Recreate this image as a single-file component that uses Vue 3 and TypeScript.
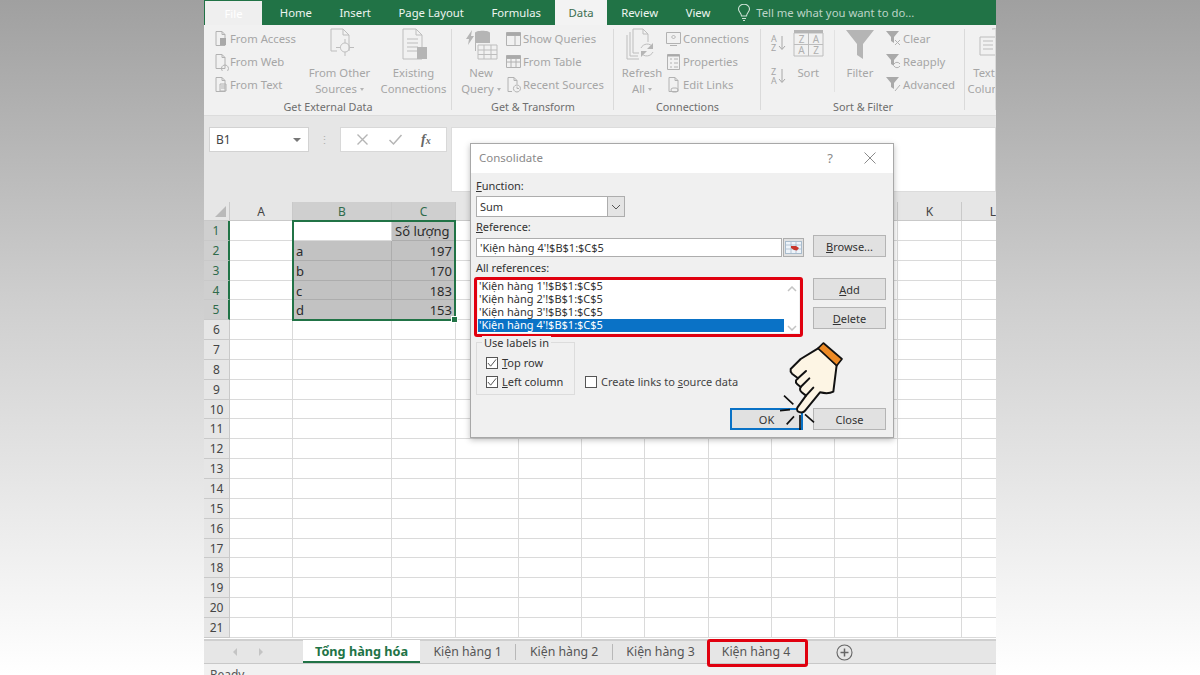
<template>
  <div class="page">
    <div class="excel">
      <!-- tabs -->
      <div class="tabs">
        <div class="file-tab">File</div>
        <div class="tab-list">
          <span v-for="t in tabs" :key="t" class="tab" :class="{ active: t === 'Data' }">{{ t }}</span>
        </div>
        <div class="tell">
          <svg width="14" height="18" viewBox="0 0 14 18" fill="none" stroke="#cfe3d7" stroke-width="1.1">
            <path d="M4.5 12c0-3-3-4-3-7a5.5 4.8 0 0 1 11 0c0 3-3 4-3 7zM5 14.500h4M6 16.500h2" />
          </svg>
          <span>Tell me what you want to do...</span>
        </div>
      </div>

      <!-- ribbon -->
      <div class="ribbon">
        <div v-for="g in groups" :key="g.name" class="group" :style="{ width: g.width + 'px' }">
          <div class="group-body" :style="{ paddingLeft: g.pad + 'px' }">
            <template v-for="(b, i) in g.items" :key="i">
              <div v-if="b.kind === 'small'" class="small-col" :style="{ width: b.width + 'px' }">
                <div v-for="s in b.rows" :key="s.label" class="small-btn">
                  <svg width="17" height="18" viewBox="0 0 17 18" fill="none" stroke="#b2b2b2" stroke-width="1">
                    <path :d="s.icon" />
                    <path v-if="s.fill" :d="s.fill" fill="#a9a9a9" stroke="none" />
                  </svg>
                  <span>{{ s.label }}</span>
                </div>
              </div>
              <div v-else-if="b.kind === 'big'" class="big-btn" :style="{ width: b.width + 'px' }">
                <svg width="34" height="34" viewBox="0 0 34 34" fill="none" stroke="#bdbdbd" stroke-width="1">
                  <path :d="b.icon" />
                  <path v-if="b.fill" :d="b.fill" fill="#b5b5b5" stroke="none" />
                  <g v-if="b.letters" class="grid-letters">
                    <text x="10.500" y="16">Z</text><text x="25" y="16">A</text>
                    <text x="10.500" y="27">A</text><text x="25" y="27">Z</text>
                  </g>
                </svg>
                <span v-for="(l, n) in b.lines" :key="l" class="big-line">
                  {{ l }}<i v-if="b.caret && n === b.lines.length - 1" class="mini-caret"></i>
                </span>
              </div>
              <div v-else-if="b.kind === 'sort'" class="sort-col">
                <div class="sort-mini">
                  <span>A<br />Z</span>
                  <svg width="8" height="16" viewBox="0 0 8 16" fill="none" stroke="#a8a8a8" stroke-width="1"><path d="M4 1v13M1 11l3 3.500L7 11" /></svg>
                </div>
                <div class="sort-mini">
                  <span>Z<br />A</span>
                  <svg width="8" height="16" viewBox="0 0 8 16" fill="none" stroke="#a8a8a8" stroke-width="1"><path d="M4 1v13M1 11l3 3.500L7 11" /></svg>
                </div>
              </div>
              <div v-else class="vsep"></div>
            </template>
          </div>
          <div class="group-label">{{ g.name }}</div>
        </div>
      </div>

      <!-- formula bar -->
      <div class="formula">
        <div class="name-box"><span>B1</span><i class="caret"></i></div>
        <div class="dots">⋮</div>
        <div class="fx-box">
          <svg width="13" height="13" viewBox="0 0 13 13" stroke="#b5b5b5" stroke-width="1.4" fill="none"><path d="M1.500 1.500l10 10M11.500 1.500l-10 10" /></svg>
          <svg width="15" height="13" viewBox="0 0 15 13" stroke="#b5b5b5" stroke-width="1.500" fill="none"><path d="M1.500 7l4 4 8-9" /></svg>
          <span class="fx">f<small>x</small></span>
        </div>
        <div class="formula-input"></div>
      </div>

      <!-- sheet -->
      <div class="sheet">
        <div class="sheet-row head">
          <div class="corner"><i></i></div>
          <div
            v-for="c in cols" :key="c.name" class="col-head" :class="{ sel: c.name === 'B' || c.name === 'C' }"
            :style="{ width: c.width + 'px' }"
          >{{ c.name }}</div>
        </div>
        <div v-for="r in 21" :key="r" class="sheet-row">
          <div class="row-head" :class="{ sel: r <= 5 }">{{ r }}</div>
          <div
            v-for="c in cols" :key="c.name" class="cell"
            :class="cellClass(r, c.name)"
            :style="{ width: c.width + 'px' }"
          >{{ cellText(r, c.name) }}</div>
        </div>
        <div class="selection"><i></i></div>
      </div>

      <!-- sheet tabs -->
      <div class="sheet-tabs">
        <div class="nav-arrows"><i class="left"></i><i class="right"></i></div>
        <div class="sheet-tab current">Tổng hàng hóa</div>
        <template v-for="(s, i) in sheets" :key="s">
          <div class="sheet-tab" :class="{ marked: i === 3 }">{{ s }}</div>
          <div v-if="i < 2" class="tab-sep"></div>
        </template>
        <div class="add-sheet">
          <svg width="17" height="17" viewBox="0 0 17 17" fill="none" stroke="#666" stroke-width="1.100">
            <circle cx="8.500" cy="8.500" r="7.500" /><path d="M8.500 4.500v8M4.500 8.500h8" stroke-width="1.500" />
          </svg>
        </div>
      </div>
      <div class="status">Ready</div>

      <!-- Consolidate dialog -->
      <div class="dialog">
        <div class="dlg-title">
          <span>Consolidate</span>
          <div class="dlg-ctrl">
            <span class="q">?</span>
            <svg width="12" height="12" viewBox="0 0 12 12" stroke="#8a8a8a" stroke-width="1" fill="none"><path d="M.5.5l11 11M11.500.5l-11 11" /></svg>
          </div>
        </div>
        <div class="dlg-body">
          <div class="dlg-left">
            <div class="lbl first"><u>F</u>unction:</div>
            <div class="select">
              <span>Sum</span>
              <div class="sel-arrow">
                <svg width="10" height="6" viewBox="0 0 10 6" fill="none" stroke="#555" stroke-width="1"><path d="M1 1l4 4 4-4" /></svg>
              </div>
            </div>
            <div class="lbl"><u>R</u>eference:</div>
            <div class="ref-row">
              <div class="ref-input">'Kiện hàng 4'!$B$1:$C$5</div>
              <div class="ref-pick">
                <svg width="17" height="13" viewBox="0 0 17 13">
                  <rect x=".5" y=".5" width="16" height="12" fill="#eef4fa" stroke="#a9bccd" />
                  <path d="M1 4h15M1 8h15M6 1v11M11 1v11" stroke="#9fb3c6" stroke-width=".7" />
                  <path d="M6 5h5l3 2-2 2.500-3-.5-3-2z" fill="#c8352a" />
                </svg>
              </div>
            </div>
            <div class="lbl all">All references:</div>
            <div class="ref-box">
              <div class="ref-list">
                <div class="ref-items">
                  <div v-for="(a, i) in refs" :key="a" class="ref-item" :class="{ on: i === 3 }">{{ a }}</div>
                </div>
                <div class="ref-scroll">
                  <svg width="10" height="6" viewBox="0 0 10 6" fill="none" stroke="#c4c4c4" stroke-width="1.500"><path d="M1 5l4-4 4 4" /></svg>
                  <svg width="10" height="6" viewBox="0 0 10 6" fill="none" stroke="#c4c4c4" stroke-width="1.500"><path d="M1 1l4 4 4-4" /></svg>
                </div>
              </div>
            </div>
            <div class="lower">
              <div class="labels-box">
                <span class="legend">Use labels in</span>
                <label class="chk"><i class="box"><svg width="11" height="10" viewBox="0 0 11 10" fill="none" stroke="#444" stroke-width="1"><path d="M1 5l3 3.500 6-7.500" /></svg></i><span><u>T</u>op row</span></label>
                <label class="chk"><i class="box"><svg width="11" height="10" viewBox="0 0 11 10" fill="none" stroke="#444" stroke-width="1"><path d="M1 5l3 3.500 6-7.500" /></svg></i><span><u>L</u>eft column</span></label>
              </div>
              <label class="chk links"><i class="box"></i><span>Create links to <u>s</u>ource data</span></label>
            </div>
          </div>
          <div class="dlg-right">
            <button class="btn browse"><u>B</u>rowse...</button>
            <button class="btn add"><u>A</u>dd</button>
            <button class="btn del"><u>D</u>elete</button>
          </div>
        </div>
        <div class="dlg-foot">
          <button class="btn ok">OK</button>
          <button class="btn">Close</button>
        </div>
      </div>

      <!-- pointing hand -->
      <svg class="hand" width="80" height="95" viewBox="0 0 240 285">
        <path d="M148 38L92 72L62 102Q60 110 66 116L84 130L78 136Q76 142 82 148L92 156L90 162Q90 168 95 172L108 182L82 218Q78 230 90 232Q100 234 106 226L150 172Q175 178 190 170L200 90Z" fill="#fdf5e4" stroke="#111" stroke-width="6" stroke-linejoin="round" />
        <path d="M84 130L108 108M92 156L118 130M108 182L130 158" stroke="#111" stroke-width="6" fill="none" stroke-linecap="round" />
        <path d="M160 24L216 72L200 92L144 40Z" fill="#ed8a25" stroke="#111" stroke-width="5" stroke-linejoin="round" />
        <path d="M42 182L70 208M30 227L60 224M50 268L72 244M90 240V285M105 238L132 262" stroke="#111" stroke-width="5" fill="none" />
      </svg>
    </div>
  </div>
</template>

<script setup lang="ts">
interface SmallRow { label: string; icon: string; fill?: string }
type Item =
  | { kind: 'small'; width: number; rows: SmallRow[] }
  | { kind: 'big'; width: number; lines: string[]; icon: string; fill?: string; caret?: boolean; letters?: boolean }
  | { kind: 'sort' }
  | { kind: 'sep' }

const tabs = ['Home', 'Insert', 'Page Layout', 'Formulas', 'Data', 'Review', 'View']

const page = 'M4 1.500h6l3 3v11H4zM10 1.500v3h3'
const grid = 'M1.500 2.500h14v12h-14zM1.500 5.500h14M1.500 9h14M6 5.500v9M11 5.500v9'

const groups: { name: string; width: number; pad: number; items: Item[] }[] = [
  {
    name: 'Get External Data', width: 248, pad: 8,
    items: [
      {
        kind: 'small', width: 92,
        rows: [
          { label: 'From Access', icon: page, fill: 'M8 8h6v7H8z' },
          { label: 'From Web', icon: page + 'M13 12a3.500 3.500 0 1 1-.1 0z' },
          { label: 'From Text', icon: page + 'M8 8h6v7H8zM9 10h4M9 12h4' },
        ],
      },
      { kind: 'big', width: 71, lines: ['From Other', 'Sources'], caret: true, icon: 'M8 2h12l6 6v16M20 2v6h6M8 2v22h6M22 16a4.500 4.500 0 1 1-.1 0zM22 12v4M22 25v4M13 20.500h4.500M26.500 20.500H31' },
      { kind: 'big', width: 77, lines: ['Existing', 'Connections'], icon: 'M6 2h13l6 6v24H6zM19 2v6h6M10 12h11M10 16h11M10 20h11M10 24h11', fill: 'M20 20h10v12H20z' },
    ],
  },
  {
    name: 'Get & Transform', width: 162, pad: 5,
    items: [
      { kind: 'big', width: 48, lines: ['New', 'Query'], caret: true, icon: 'M14 18h19v14H14zM14 23h19M14 27.500h19M20 18v14M27 18v14', fill: 'M11 6c0-3 15-3 15 0v10H12v8h-1zM2 12l6-9-1 6 3 0-6 9 1-6z' },
      {
        kind: 'small', width: 109,
        rows: [
          { label: 'Show Queries', icon: 'M1.500 2.500h14v13h-14zM1.500 5.500h14M10 5.500v10', fill: 'M1.500 2.500h14v3h-14z' },
          { label: 'From Table', icon: grid, fill: 'M1.500 2.500h14v3h-14z' },
          { label: 'Recent Sources', icon: 'M3 1.500h6l3 3v4M9 1.500v3h3M3 1.500v14h4M12 9a3.500 3.500 0 1 1-.1 0zM12 10.500v2h2' },
        ],
      },
    ],
  },
  {
    name: 'Connections', width: 147, pad: 5,
    items: [
      { kind: 'big', width: 46, lines: ['Refresh', 'All'], caret: true, icon: 'M8 2h10l5 5v8M18 2v5h5M8 2v24h6M5 5v24h8M2 8v24h12M28 20a7 7 0 0 0-12 1M16 26a7 7 0 0 0 12-1', fill: 'M28 16v6h-6zM16 30v-6h6z' },
      {
        kind: 'small', width: 96,
        rows: [
          { label: 'Connections', icon: 'M1.500 2.500h14v11h-14zM5 15.500h7M8.500 5l2 2-2 2-2-2z' },
          { label: 'Properties', icon: 'M2.500 1.500h12v15h-12zM5 6h2M5 10h2M5 14h2M9 6h4M9 10h4M9 14h4', fill: 'M2.500 1.500h12v2h-12z' },
          { label: 'Edit Links', icon: page + 'M4 15.500h1M8 12a2 2 0 0 0 0 4h3a2 2 0 0 0 0-4z' },
        ],
      },
    ],
  },
  {
    name: 'Sort & Filter', width: 204, pad: 8,
    items: [
      { kind: 'sort' },
      { kind: 'big', width: 44, lines: ['Sort'], letters: true, icon: 'M3 6h29v23H3zM17.500 6v23M3 17.500h29', fill: 'M3 3h29v3H3z' },
      { kind: 'sep' },
      { kind: 'big', width: 50, lines: ['Filter'], icon: '', fill: 'M3 3h28L20 17v15l-6-4V17z' },
      {
        kind: 'small', width: 80,
        rows: [
          { label: 'Clear', icon: 'M10 10l5 5M15 10l-5 5', fill: 'M1 1h13l-5 6v6l-3-2V7z' },
          { label: 'Reapply', icon: 'M9 11a3.500 3.500 0 0 1 6 0M15 13a3.500 3.500 0 0 1-6 0', fill: 'M1 1h13l-5 6v6l-3-2V7z' },
          { label: 'Advanced', icon: 'M10 15l5-6', fill: 'M1 1h13l-5 6v6l-3-2V7z' },
        ],
      },
    ],
  },
  {
    name: '', width: 31, pad: 2,
    items: [
      { kind: 'big', width: 48, lines: ['Text to', 'Columns'], icon: 'M6 10h16v18H6zM9 14h10M9 18h10M9 22h10M18 2a8 8 0 0 1 10 6' },
    ],
  },
]

const cols = [
  { name: 'A', width: 63 }, { name: 'B', width: 99 }, { name: 'C', width: 64 },
  { name: 'D', width: 63 }, { name: 'E', width: 63 }, { name: 'F', width: 63 },
  { name: 'G', width: 64 }, { name: 'H', width: 63 }, { name: 'I', width: 63 },
  { name: 'J', width: 63 }, { name: 'K', width: 64 }, { name: 'L', width: 63 },
]

const data: Record<string, string> = {
  C1: 'Số lượng', B2: 'a', C2: '197', B3: 'b', C3: '170', B4: 'c', C4: '183', B5: 'd', C5: '153',
}

function cellText(r: number, c: string) {
  return data[c + r] ?? ''
}

function cellClass(r: number, c: string) {
  return {
    shade: (c === 'C' && r <= 5) || (c === 'B' && r >= 2 && r <= 5),
    num: c === 'C' && r >= 2,
  }
}

const sheets = ['Kiện hàng 1', 'Kiện hàng 2', 'Kiện hàng 3', 'Kiện hàng 4']
const refs = [1, 2, 3, 4].map((n) => `'Kiện hàng ${n}'!$B$1:$C$5`)
</script>

<style>
html, body { margin: 0; height: 100%; overflow: hidden; }
</style>

<style scoped>
.page {
  height: 675px;
  display: flex;
  justify-content: center;
  background: linear-gradient(180deg, #a0a0a0 0%, #cfcfcf 45%, #ffffff 100%);
  font-family: "Noto Sans", "Liberation Sans", sans-serif;
}

.excel {
  position: relative;
  width: 792px;
  height: 675px;
  overflow: hidden;
  display: flex;
  flex-direction: column;
  background: #e6e6e6;
  font-size: 11.300px;
}

/* 顶部标签 */
.tabs {
  height: 25px;
  flex-shrink: 0;
  display: flex;
  align-items: stretch;
  background: #217346;
  color: #eef5f0;
}
.file-tab {
  width: 57px;
  margin: 1px 0 0 1px;
  display: flex;
  align-items: center;
  justify-content: center;
  background: #efefef;
  color: #fff;
}
.tab-list { display: flex; margin-left: 4px; }
.tab {
  padding: 0 13.800px;
  line-height: 25px;
}
.tab.active { background: #f3f3f3; color: #3c6e50; }
.tell {
  margin-left: 13px;
  display: flex;
  align-items: center;
  gap: 5px;
  color: #bcd4c6;
}

/* ribbon */
.ribbon {
  height: 91px;
  flex-shrink: 0;
  display: flex;
  background: #f1f1f1;
  border-bottom: 1px solid #dcdcdc;
  box-sizing: border-box;
}
.group {
  flex-shrink: 0;
  display: flex;
  flex-direction: column;
  box-sizing: border-box;
  padding-top: 2px;
  color: #a6a6a6;
  position: relative;
}
.group::after {
  content: '';
  position: absolute;
  right: 0;
  top: 4px;
  bottom: 5px;
  width: 1px;
  background: #dadada;
}
.group-body {
  flex: 1;
  display: flex;
  align-items: flex-start;
  min-height: 0;
}
.group-label {
  height: 18px;
  line-height: 20px;
  text-align: center;
  font-size: 10.800px;
  color: #6e6e6e;
}
.small-col { flex-shrink: 0; display: flex; flex-direction: column; }
.small-btn {
  height: 23px;
  display: flex;
  align-items: center;
  gap: 1px;
  white-space: nowrap;
}
.big-btn {
  flex-shrink: 0;
  display: flex;
  flex-direction: column;
  align-items: center;
  white-space: nowrap;
}
.big-btn svg { margin-bottom: 4px; }
.big-line { line-height: 16px; }
.mini-caret {
  display: inline-block;
  margin-left: 3px;
  vertical-align: middle;
  border-left: 2.500px solid transparent;
  border-right: 2.500px solid transparent;
  border-top: 3px solid #b5b5b5;
}
.grid-letters text {
  fill: #b0b0b0;
  stroke: none;
  font-size: 10px;
  text-anchor: middle;
}
.sort-col {
  width: 24px;
  padding: 7px 0 0 2px;
  box-sizing: border-box;
  display: flex;
  flex-direction: column;
  gap: 15px;
}
.sort-mini {
  display: flex;
  align-items: center;
  gap: 1px;
  font-size: 9px;
  line-height: 9px;
  color: #a6a6a6;
}
.vsep { width: 1px; height: 62px; margin: 3px 0 0 4px; background: #e2e2e2; }

/* 编辑栏 */
.formula {
  height: 86px;
  flex-shrink: 0;
  display: flex;
  align-items: flex-start;
  padding-top: 11px;
  box-sizing: border-box;
  background: #e6e6e6;
}
.name-box {
  width: 100px;
  height: 25px;
  margin-left: 5px;
  box-sizing: border-box;
  background: #fff;
  border: 1px solid #d2d2d2;
  display: flex;
  align-items: center;
  justify-content: space-between;
  padding: 0 7px 0 6px;
  color: #444;
  font-size: 12px;
}
.caret {
  border-left: 4px solid transparent;
  border-right: 4px solid transparent;
  border-top: 4px solid #777;
}
.dots { width: 31px; text-align: center; line-height: 25px; color: #b0b0b0; }
.fx-box {
  width: 107px;
  height: 25px;
  box-sizing: border-box;
  background: #fff;
  border: 1px solid #d8d8d8;
  display: flex;
  align-items: center;
  justify-content: space-around;
  padding: 0 6px;
}
.fx {
  font-family: "Liberation Serif", serif;
  font-style: italic;
  font-weight: bold;
  font-size: 14px;
  color: #666;
}
.fx small { font-size: 10px; }
.formula-input {
  flex: 1;
  height: 65px;
  margin-left: 4px;
  background: #fff;
  border: 1px solid #dcdcdc;
  box-sizing: border-box;
}

/* 工作表 */
.sheet {
  position: relative;
  height: 437px;
  flex-shrink: 0;
  overflow: hidden;
  background: #fff;
  font-size: 12px;
}
.sheet-row { display: flex; height: 19.850px; }
.sheet-row.head { height: 19px; }
.corner {
  width: 26px;
  flex-shrink: 0;
  box-sizing: border-box;
  background: #e6e6e6;
  border-right: 1px solid #c9c9c9;
  border-bottom: 1px solid #c9c9c9;
  position: relative;
}
.corner i {
  position: absolute;
  right: 3px;
  bottom: 3px;
  border-left: 11px solid transparent;
  border-bottom: 11px solid #b9b9b9;
}
.col-head, .row-head {
  flex-shrink: 0;
  box-sizing: border-box;
  background: #e6e6e6;
  color: #444;
  text-align: center;
}
.col-head {
  line-height: 19px;
  border-right: 1px solid #c9c9c9;
  border-bottom: 1px solid #c9c9c9;
}
.col-head.sel { background: #cfcfcf; color: #2f6b4b; }
.row-head {
  width: 26px;
  line-height: 19px;
  border-right: 1px solid #c9c9c9;
  border-bottom: 1px solid #c9c9c9;
}
.row-head.sel { background: #cfcfcf; color: #2f6b4b; border-right: 2px solid #217346; }
.cell {
  flex-shrink: 0;
  box-sizing: border-box;
  border-right: 1px solid #dadada;
  border-bottom: 1px solid #dadada;
  padding: 0 3px;
  font-size: 13px;
  line-height: 20px;
  color: #2b2b2b;
  white-space: nowrap;
  overflow: hidden;
}
.cell.shade { background: #c2c2c2; border-color: #adadad; }
.cell.num { text-align: right; }
/* 选区边框，盖在单元格上 */
.selection {
  position: absolute;
  left: 88px;
  top: 18px;
  width: 164px;
  height: 101px;
  box-sizing: border-box;
  border: 2px solid #217346;
  pointer-events: none;
}
.selection i {
  position: absolute;
  right: -4px;
  bottom: -4px;
  width: 5px;
  height: 5px;
  background: #217346;
  border: 1px solid #fff;
}

/* 工作表标签 */
.sheet-tabs {
  height: 25px;
  flex-shrink: 0;
  display: flex;
  align-items: stretch;
  background: #e6e6e6;
  border-top: 2px solid #cfcfcf;
  border-bottom: 1px solid #c8c8c8;
  box-sizing: border-box;
  font-size: 12.300px;
  color: #555;
}
.nav-arrows {
  width: 99px;
  display: flex;
  align-items: center;
  justify-content: center;
  gap: 22px;
  padding-right: 12px;
  box-sizing: border-box;
}
.nav-arrows i {
  border-top: 4px solid transparent;
  border-bottom: 4px solid transparent;
}
.nav-arrows .left { border-right: 4px solid #c4c4c4; }
.nav-arrows .right { border-left: 4px solid #c4c4c4; }
.sheet-tab {
  position: relative;
  padding: 0 13.500px;
  line-height: 22px;
  white-space: nowrap;
}
.sheet-tab.current {
  padding: 0 12px;
  width: 117px;
  box-sizing: border-box;
  background: #fff;
  color: #217346;
  font-weight: 700;
  font-size: 12.700px;
  border-bottom: 2px solid #217346;
  text-align: center;
  margin-top: -1px;
}
.tab-sep { width: 1px; margin: 3px 0; background: #b8b8b8; }
.sheet-tab.marked::after {
  content: '';
  position: absolute;
  left: -1.500px;
  right: -4.500px;
  top: -2px;
  bottom: -4px;
  border: 3px solid #e0000f;
  border-radius: 3px;
}
.add-sheet { margin-left: 32px; display: flex; align-items: center; }
.status {
  height: 11px;
  padding: 4px 0 0 6px;
  box-sizing: border-box;
  background: #f1f1f1;
  color: #555;
  line-height: 13px;
  font-size: 12px;
  overflow: hidden;
}

/* 对话框 */
.dialog {
  position: absolute;
  left: 266px;
  top: 143px;
  width: 424px;
  height: 295px;
  box-sizing: border-box;
  background: #f0f0f0;
  border: 1px solid #a8a8a8;
  box-shadow: 0 2px 6px rgba(0, 0, 0, 0.25);
  font-size: 11px;
  color: #333;
  display: flex;
  flex-direction: column;
}
.dlg-title {
  height: 29px;
  flex-shrink: 0;
  box-sizing: border-box;
  padding: 0 17px 2px 8px;
  background: #fff;
  display: flex;
  align-items: center;
  justify-content: space-between;
  color: #8a8a8a;
  font-size: 11.500px;
}
.dlg-ctrl { display: flex; align-items: center; gap: 31px; }
.q { font-size: 13px; color: #8a8a8a; }
.dlg-body { display: flex; padding: 0 7px 0 5px; }
.dlg-left { width: 328px; flex-shrink: 0; }
.dlg-right { margin-left: 9px; display: flex; flex-direction: column; }
.lbl { line-height: 13px; margin-top: 3px; }
.lbl.first { margin-top: 6px; }
.lbl.all { margin-top: 4px; }
.select {
  width: 149px;
  height: 21px;
  margin-top: 4px;
  box-sizing: border-box;
  background: #fff;
  border: 1px solid #adadad;
  display: flex;
  align-items: center;
  justify-content: space-between;
  padding-left: 3px;
}
.sel-arrow {
  width: 16px;
  height: 19px;
  background: #e4e4e4;
  border-left: 1px solid #adadad;
  display: flex;
  align-items: center;
  justify-content: center;
}
.ref-row { display: flex; margin-top: 5px; height: 19px; }
.ref-input {
  width: 306px;
  box-sizing: border-box;
  background: #fff;
  border: 1px solid #adadad;
  padding-left: 3px;
  line-height: 17px;
}
.ref-pick {
  width: 21px;
  margin-left: 1px;
  box-sizing: border-box;
  background: #e1e1e1;
  border: 1px solid #adadad;
  display: flex;
  align-items: center;
  justify-content: center;
}
.ref-box {
  width: 329px;
  height: 60px;
  margin: 3px 0 0 -2px;
  box-sizing: border-box;
  border: 3px solid #e0000f;
  border-radius: 3px;
  padding: 0 1px 1px;
}
.ref-list {
  height: 53px;
  background: #fff;
  display: flex;
}
.ref-items { width: 306px; flex-shrink: 0; }
.ref-item { height: 13px; line-height: 12px; padding-left: 1px; white-space: nowrap; }
.ref-item.on { background: #0a72c6; color: #fff; }
.ref-scroll {
  flex: 1;
  display: flex;
  flex-direction: column;
  align-items: center;
  justify-content: space-between;
  padding: 6px 0 2px;
}
.lower { display: flex; align-items: flex-end; margin-top: 5px; }
.labels-box {
  position: relative;
  width: 99px;
  height: 53px;
  box-sizing: border-box;
  border: 1px solid #dcdcdc;
  padding: 13px 0 0 9px;
  display: flex;
  flex-direction: column;
  gap: 6px;
}
.legend {
  position: absolute;
  left: 5px;
  top: -7px;
  padding: 0 2px;
  background: #f0f0f0;
  line-height: 13px;
}
.chk { display: flex; align-items: center; gap: 4px; line-height: 13px; }
.box {
  width: 12px;
  height: 12px;
  flex-shrink: 0;
  box-sizing: border-box;
  background: #fff;
  border: 1px solid #555;
  display: flex;
  align-items: center;
  justify-content: center;
}
.links { margin: 0 0 7px 10px; color: #444; }
.btn {
  width: 73px;
  height: 22px;
  padding: 0;
  box-sizing: border-box;
  background: #e1e1e1;
  border: 1px solid #b4b4b4;
  font-family: inherit;
  font-size: 11px;
  color: #333;
}
.btn.browse { margin-top: 62px; }
.btn.add { margin-top: 21px; }
.btn.del { margin-top: 7px; }
.dlg-foot {
  display: flex;
  justify-content: flex-end;
  gap: 10px;
  padding: 13px 7px 0 0;
}
.btn.ok { border: 2px solid #0a72c6; }

.hand {
  position: absolute;
  left: 566px;
  top: 335px;
}
</style>
